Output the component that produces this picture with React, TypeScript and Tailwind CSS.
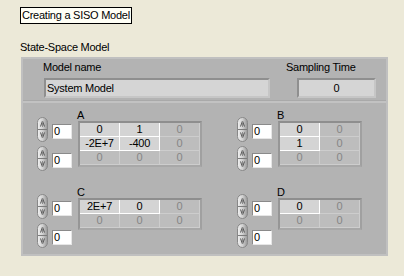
import React from "react";

const Spin = () => (
  <svg width="11" height="25" viewBox="0 0 11 25" className="block shrink-0">
    <defs>
      <linearGradient id="spg" x1="0" x2="1" y1="0" y2="0">
        <stop offset="0" stopColor="#f2f2f2" />
        <stop offset="0.5" stopColor="#d0d0d0" />
        <stop offset="1" stopColor="#969696" />
      </linearGradient>
    </defs>
    <rect x="0.5" y="0.5" width="10" height="24" rx="5" fill="url(#spg)" stroke="#888888" />
    <line x1="1" y1="12.5" x2="10" y2="12.5" stroke="#7c7c7c" />
    <path d="M3.5 9.5 L5.5 4 L7.5 9.5" fill="none" stroke="#555555" />
    <path d="M5.5 4 L5.5 10" fill="none" stroke="#8a8a8a" />
    <path d="M3.5 15.5 L5.5 21 L7.5 15.5" fill="none" stroke="#555555" />
    <path d="M5.5 15 L5.5 21" fill="none" stroke="#8a8a8a" />
  </svg>
);

const Index = () => (
  <div className="flex items-start gap-[4px]">
    <Spin />
    <div className="mt-[7px] w-[20px] h-[15px] bg-white border border-t-[#8a8a8a] border-l-[#8a8a8a] border-r-[#e6e6e6] border-b-[#e6e6e6] leading-[13px] pl-[1px] text-black">
      0
    </div>
  </div>
);

type Cell = [string, boolean];

const Matrix = ({ rows }: { rows: Cell[][] }) => (
  <div className="border-2 border-t-[#8e8e8e] border-l-[#969696] border-r-[#a0a0a0] border-b-[#a8a8a8] w-fit">
    {rows.map((r, i) => (
      <div key={i} className="flex">
        {r.map(([v, a], j) => (
          <div
            key={j}
            className={
              a
                ? "w-[40px] h-[14px] leading-[13px] text-center border-r border-b border-white bg-[#d4d4d4] text-black"
                : "w-[40px] h-[14px] leading-[13px] text-center border-r border-b border-[#cdcdcd] bg-[#bdbdbd] text-[#868686]"
            }
          >
            {v}
          </div>
        ))}
      </div>
    ))}
  </div>
);

const Block = ({ label, rows }: { label: string; rows: Cell[][] }) => (
  <div className="flex items-start">
    <div className="mt-[9px] flex flex-col gap-[4px]">
      <Index />
      <Index />
    </div>
    <div className="ml-[6px] flex flex-col">
      <div className="h-[13px] leading-[14px] -ml-[1px] text-black">{label}</div>
      <Matrix rows={rows} />
    </div>
  </div>
);

export default function App() {
  const A: Cell[][] = [
    [["0", true], ["1", true], ["0", false]],
    [["-2E+7", true], ["-400", true], ["0", false]],
    [["0", false], ["0", false], ["0", false]],
  ];
  const B: Cell[][] = [
    [["0", true], ["0", false]],
    [["1", true], ["0", false]],
    [["0", false], ["0", false]],
  ];
  const C: Cell[][] = [
    [["2E+7", true], ["0", true], ["0", false]],
    [["0", false], ["0", false], ["0", false]],
  ];
  const D: Cell[][] = [
    [["0", true], ["0", false]],
    [["0", false], ["0", false]],
  ];
  return (
    <div
      className="w-[404px] h-[276px] bg-[#ECE9D8] pt-[7px] pl-[20px] text-[11px] tracking-[-0.25px] text-black overflow-hidden"
      style={{ fontFamily: '"Liberation Sans", Arial, sans-serif' }}
    >
      <div className="inline-block align-top border border-black bg-[#FFFFF6] h-[17px] leading-[15px] px-[1px]">
        Creating a SISO Model
      </div>
      <div className="mt-[16px] leading-[14px] h-[14px]">State-Space Model</div>
      <div className="ml-[1px] mt-[3px] w-[367px] h-[199px] bg-[#b3b3b3] border-2 border-[#c0c0c0] flex flex-col">
        <div className="h-[41px] pt-[1px] pl-[21px] flex">
          <div className="flex flex-col">
            <div className="leading-[14px] h-[14px] -ml-[1px]">Model name</div>
            <div className="mt-[4px] w-[226px] h-[20px] bg-[#d5d5d5] border-2 border-t-[#8f8f8f] border-l-[#8f8f8f] border-r-[#c6c6c6] border-b-[#c6c6c6] leading-[16px] pl-[1px]">
              System Model
            </div>
          </div>
          <div className="ml-[16px] flex flex-col">
            <div className="leading-[14px] h-[14px]">Sampling Time</div>
            <div className="mt-[4px] ml-[11px] w-[79px] h-[20px] bg-[#d5d5d5] border-2 border-t-[#8f8f8f] border-l-[#8f8f8f] border-r-[#c6c6c6] border-b-[#c6c6c6] leading-[16px] text-center">
              0
            </div>
          </div>
        </div>
        <div className="h-[1px] bg-[#a9a9a9]" />
        <div className="h-[2px] bg-[#c2c2c2]" />
        <div className="pt-[5px] pl-[14px] grid grid-cols-[200px_150px] gap-y-[14px]">
          <Block label="A" rows={A} />
          <Block label="B" rows={B} />
          <Block label="C" rows={C} />
          <Block label="D" rows={D} />
        </div>
      </div>
    </div>
  );
}
